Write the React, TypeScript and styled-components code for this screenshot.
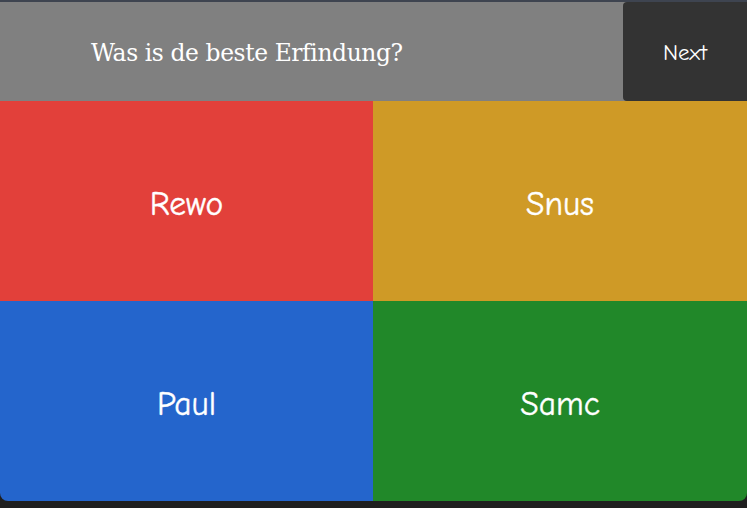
import React from "react";
import styled, { createGlobalStyle } from "styled-components";

const Global = createGlobalStyle`
  html, body { margin: 0; padding: 0; }
  body {
    background: #1f1f1f;
    width: 747px;
    height: 508px;
    overflow: hidden;
  }
`;

const Page = styled.div`
  width: 747px;
  height: 508px;
  display: flex;
  flex-direction: column;
  background: linear-gradient(#3e4450 0 2px, #1f1f1f 2px);
`;

const Card = styled.div`
  margin-top: 2px;
  display: flex;
  flex-direction: column;
  border-radius: 0 0 8px 8px;
  overflow: hidden;
`;

const Header = styled.div`
  height: 99px;
  display: flex;
  background: #808080;
`;

const Question = styled.div`
  flex: 1;
  display: flex;
  align-items: center;
  padding-left: 91px;
  padding-top: 2px;
  color: #fff;
  font-family: "DejaVu Serif", "Liberation Serif", serif;
  font-size: 23.4px;
  letter-spacing: -0.4px;
`;

const NextButton = styled.button`
  width: 124px;
  border: none;
  border-radius: 4px 0 0 4px;
  background: #333333;
  color: #fff;
  font-family: "Comic Sans MS", "Comic Neue", "Noto Sans", sans-serif;
  font-size: 23px;
  padding: 2px 0 0 0;
  cursor: pointer;
`;

const Grid = styled.div`
  display: grid;
  grid-template-columns: 373px 374px;
  grid-template-rows: 200px 200px;
`;

const Tile = styled.div<{ $bg: string }>`
  background: ${(p) => p.$bg};
  display: flex;
  align-items: center;
  justify-content: center;
  color: #fff;
  font-family: "Comic Sans MS", "Comic Neue", "Noto Sans", sans-serif;
  font-size: 33.5px;
  padding-top: 6px;
  -webkit-text-stroke: 0.4px #fff;
`;

const answers = [
  { label: "Rewo", color: "#e2403a" },
  { label: "Snus", color: "#cf9a26" },
  { label: "Paul", color: "#2465cc" },
  { label: "Samc", color: "#218829" },
];

export default function App() {
  return (
    <Page>
      <Global />
      <Card>
        <Header>
          <Question>Was is de beste Erfindung?</Question>
          <NextButton>Next</NextButton>
        </Header>
        <Grid>
          {answers.map((a) => (
            <Tile key={a.label} $bg={a.color}>
              {a.label}
            </Tile>
          ))}
        </Grid>
      </Card>
    </Page>
  );
}
